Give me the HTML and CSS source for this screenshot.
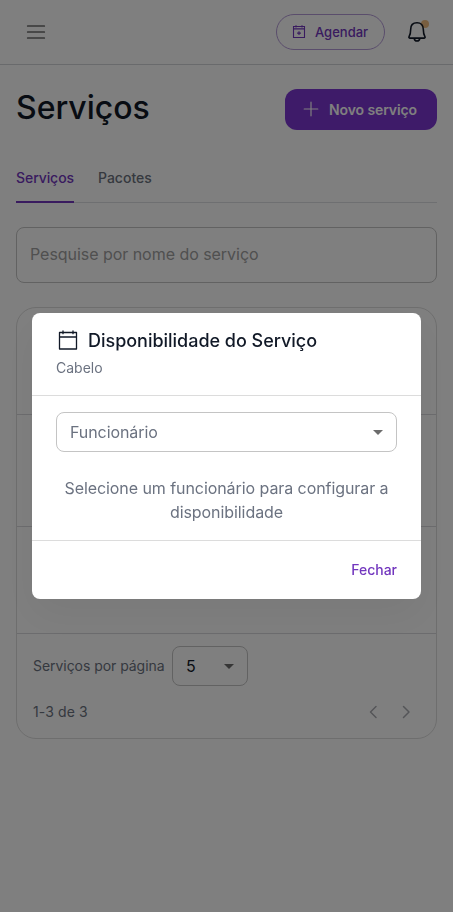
FILE: index.html
```html
<!DOCTYPE html>
<html lang="pt-BR">
<head>
<meta charset="utf-8">
<meta name="viewport" content="width=device-width, initial-scale=1">
<title>Serviços</title>
<link rel="stylesheet" href="styles.css">
</head>
<body>
<header class="topbar">
  <button class="icon-btn menu-btn" aria-label="Menu">
    <svg width="24" height="24" viewBox="0 0 24 24" fill="none" stroke="#6c6c6c" stroke-width="1.7" stroke-linecap="round"><path d="M3.7 6h16.6M3.7 12h16.6M3.7 18h16.6"/></svg>
  </button>
  <div class="topbar-actions">
    <button class="schedule-btn">
      <svg width="16" height="16" viewBox="0 0 16 16" fill="none" stroke="currentColor" stroke-width="1.1"><path d="M2.500 2.500h11v11h-11zM2.500 4.900h11M5 1.300v2.200M11 1.300v2.200M8 7.200v3.800M6.100 9.100h3.800"/></svg>
      <span>Agendar</span>
    </button>
    <button class="icon-btn bell-btn" aria-label="Notificações">
      <span class="bell-dot"></span>
      <svg width="24" height="24" viewBox="0 0 24 24" fill="none" stroke="#111927" stroke-width="1.6" stroke-linejoin="round" stroke-linecap="round"><path d="M12 2.800c-4 0-6.300 2.700-6.300 6.500 0 3.600-.5 5.500-1.700 7.600-.3.600 0 1.200.7 1.200h14.600c.7 0 1-.6.7-1.200-1.200-2.100-1.700-4-1.700-7.600 0-3.800-2.300-6.500-6.300-6.500zM9.200 18.300c.2 1.700 1.200 2.700 2.800 2.700s2.600-1 2.800-2.700"/></svg>
    </button>
  </div>
</header>
<main class="page">
  <div class="page-head">
    <h1>Serviços</h1>
    <button class="primary-btn">
      <svg width="20" height="20" viewBox="0 0 20 20" fill="none" stroke="currentColor" stroke-width="1.2" stroke-linecap="round"><path d="M10 3.200v13.600M3.200 10h13.600"/></svg>
      <span>Novo serviço</span>
    </button>
  </div>
  <nav class="tabs">
    <a class="tab tab-active">Serviços</a>
    <a class="tab">Pacotes</a>
  </nav>
  <input class="search" type="text" placeholder="Pesquise por nome do serviço">
  <section class="card">
    <div class="row row-first"></div>
    <div class="row row-mid"></div>
    <div class="row row-last"></div>
    <div class="pager">
      <div class="pager-size">
        <span class="pager-label">Serviços por página</span>
        <div class="select select-small"><span>5</span><i class="caret"></i></div>
      </div>
      <div class="pager-nav">
        <span>1-3 de 3</span>
        <div class="arrows">
          <svg width="16" height="16" viewBox="0 0 16 16"><path d="M10 2.500 4.500 8l5.500 5.500"/></svg>
          <svg width="16" height="16" viewBox="0 0 16 16"><path d="M5.500 2.500 11 8 5.500 13.500"/></svg>
        </div>
      </div>
    </div>
  </section>
</main>
<div class="backdrop">
  <div class="dialog" role="dialog" aria-labelledby="dialog-title">
    <div class="dialog-head">
      <div class="dialog-title">
        <svg width="24" height="24" viewBox="0 0 24 24" fill="none" stroke="#111927" stroke-width="1.300" stroke-linecap="round" stroke-linejoin="round"><path d="M3.500 4.500h17v16.500h-17zM3.500 9h17M7 3v2.700M17 3v2.700"/></svg>
        <h2 id="dialog-title">Disponibilidade do Serviço</h2>
      </div>
      <p class="dialog-sub">Cabelo</p>
    </div>
    <div class="dialog-body">
      <div class="select select-wide"><span>Funcionário</span><i class="caret"></i></div>
      <p class="hint">Selecione um funcionário para configurar a disponibilidade</p>
    </div>
    <div class="dialog-foot"><button class="text-btn">Fechar</button></div>
  </div>
</div>
</body>
</html>
```
FILE: styles.css
```css
* { box-sizing: border-box; }
body {
  margin: 0;
  height: 912px;
  overflow: hidden;
  background: #fff;
  color: #111927;
  font-family: Inter, "Liberation Sans", sans-serif;
}
h1, h2, p { margin: 0; font-weight: 500; }
button { border: 0; background: none; padding: 0; font: inherit; color: inherit; }
svg { display: block; flex: none; }

.topbar {
  height: 65px;
  padding: 0 16px;
  display: flex;
  align-items: center;
  justify-content: space-between;
  border-bottom: 1px solid #d2d4d8;
}
.icon-btn { width: 40px; height: 40px; display: grid; place-items: center; }
.topbar-actions { display: flex; align-items: center; gap: 12px; }
.schedule-btn {
  width: 109px;
  height: 36px;
  display: flex;
  align-items: center;
  padding: 0 14px;
  gap: 8px;
  border: 1px solid #b49ad8;
  border-radius: 18px;
  color: #7236be;
  font-size: 13px;
  font-weight: 500;
}
.bell-btn { position: relative; }
.bell-dot {
  position: absolute;
  top: 8px;
  right: 8px;
  width: 8px;
  height: 8px;
  border-radius: 50%;
  background: #f0bc80;
}
.bell-btn svg { position: relative; }

.page { padding: 24px 16px 0; }
.page-head { display: flex; justify-content: space-between; height: 41px; }
h1 { font-size: 32px; line-height: 38px; font-weight: 450; letter-spacing: 0; }
.primary-btn {
  width: 152px;
  height: 41px;
  display: flex;
  align-items: center;
  padding: 0 16px 1px;
  gap: 8px;
  border-radius: 12px;
  background: #7c36d2;
  color: #fff;
  font-size: 14px;
  font-weight: 600;
  letter-spacing: -.1px;
}
.tabs {
  display: flex;
  gap: 24px;
  height: 49px;
  margin-top: 24px;
  border-bottom: 1px solid #dcdee2;
}
.tab {
  height: 49px;
  line-height: 48px;
  font-size: 14px;
  font-weight: 500;
  color: #6c737f;
}
.tab-active { width: 58px; white-space: nowrap; color: #7236be; border-bottom: 2px solid #7236be; letter-spacing: -.07px; }
.search {
  display: block;
  width: 100%;
  height: 56px;
  margin-top: 24px;
  padding: 0 13px 2px;
  border: 1px solid #c4c4c4;
  border-radius: 8px;
  background: none;
  font: 400 16px Inter, sans-serif;
  letter-spacing: -.04px;
}
.search::placeholder { color: #a0a0a0; opacity: 1; }
.card {
  height: 432px;
  margin-top: 24px;
  border: 1px solid #dcdcdc;
  border-radius: 20px;
}
.row { border-bottom: 1px solid #d8d9dc; }
.row-first { height: 107px; }
.row-mid { height: 112px; }
.row-last { height: 107px; }
.pager { padding: 12px 16px 0; font-size: 14px; color: #6b7280; }
.pager-size { display: flex; align-items: center; gap: 8px; }
.pager-label { width: 131px; white-space: nowrap; letter-spacing: -.05px; padding-bottom: 1px; }
.pager-nav { display: flex; align-items: center; justify-content: space-between; height: 52px; }
.pager-nav span { padding-bottom: 1px; letter-spacing: .1px; }
.arrows { display: flex; gap: 16px; padding-right: 6px; }
.arrows path { fill: none; stroke: #a9abb0; stroke-width: 1.500; stroke-linecap: round; stroke-linejoin: round; }

.select {
  height: 40px;
  display: flex;
  align-items: center;
  justify-content: space-between;
  padding: 0 13px;
  border: 1px solid #c4c4c4;
  border-radius: 8px;
  font-size: 16px;
}
.select-small { width: 76px; color: #111927; }
.select-wide { color: #6b7280; letter-spacing: -.08px; }
.caret {
  border: 5px solid transparent;
  border-top-color: #6c6c6c;
  border-bottom: 0;
}

.backdrop {
  position: fixed;
  inset: 0;
  display: grid;
  place-items: center;
  background: rgba(0, 0, 0, .5);
}
.dialog {
  width: 389px;
  height: 286px;
  border-radius: 8px;
  background: #fff;
  box-shadow: 0 16px 40px rgba(0, 0, 0, .05);
}
.dialog-head { height: 82px; padding: 14px 24px 0; }
.dialog-title { display: flex; align-items: center; gap: 8px; height: 27px; }
.dialog-title svg { margin-top: -1px; }
.dialog-title h2 { font-size: 18px; line-height: 27px; letter-spacing: -.02px; }
.dialog-sub { font-size: 14px; line-height: 22px; font-weight: 400; color: #6b7280; margin-top: 3px; }
.dialog-body {
  height: 146px;
  padding: 16px 24px;
  border: solid #dcdcdc;
  border-width: 1px 0;
}
.hint {
  margin-top: 24px;
  font-size: 16px;
  line-height: 24px;
  font-weight: 400;
  letter-spacing: -.07px;
  color: #6b7280;
  text-align: center;
}
.dialog-foot { height: 58px; padding: 0 24px 1px; display: flex; align-items: center; justify-content: flex-end; }
.text-btn { color: #7236be; font-size: 14px; font-weight: 500; }
```
